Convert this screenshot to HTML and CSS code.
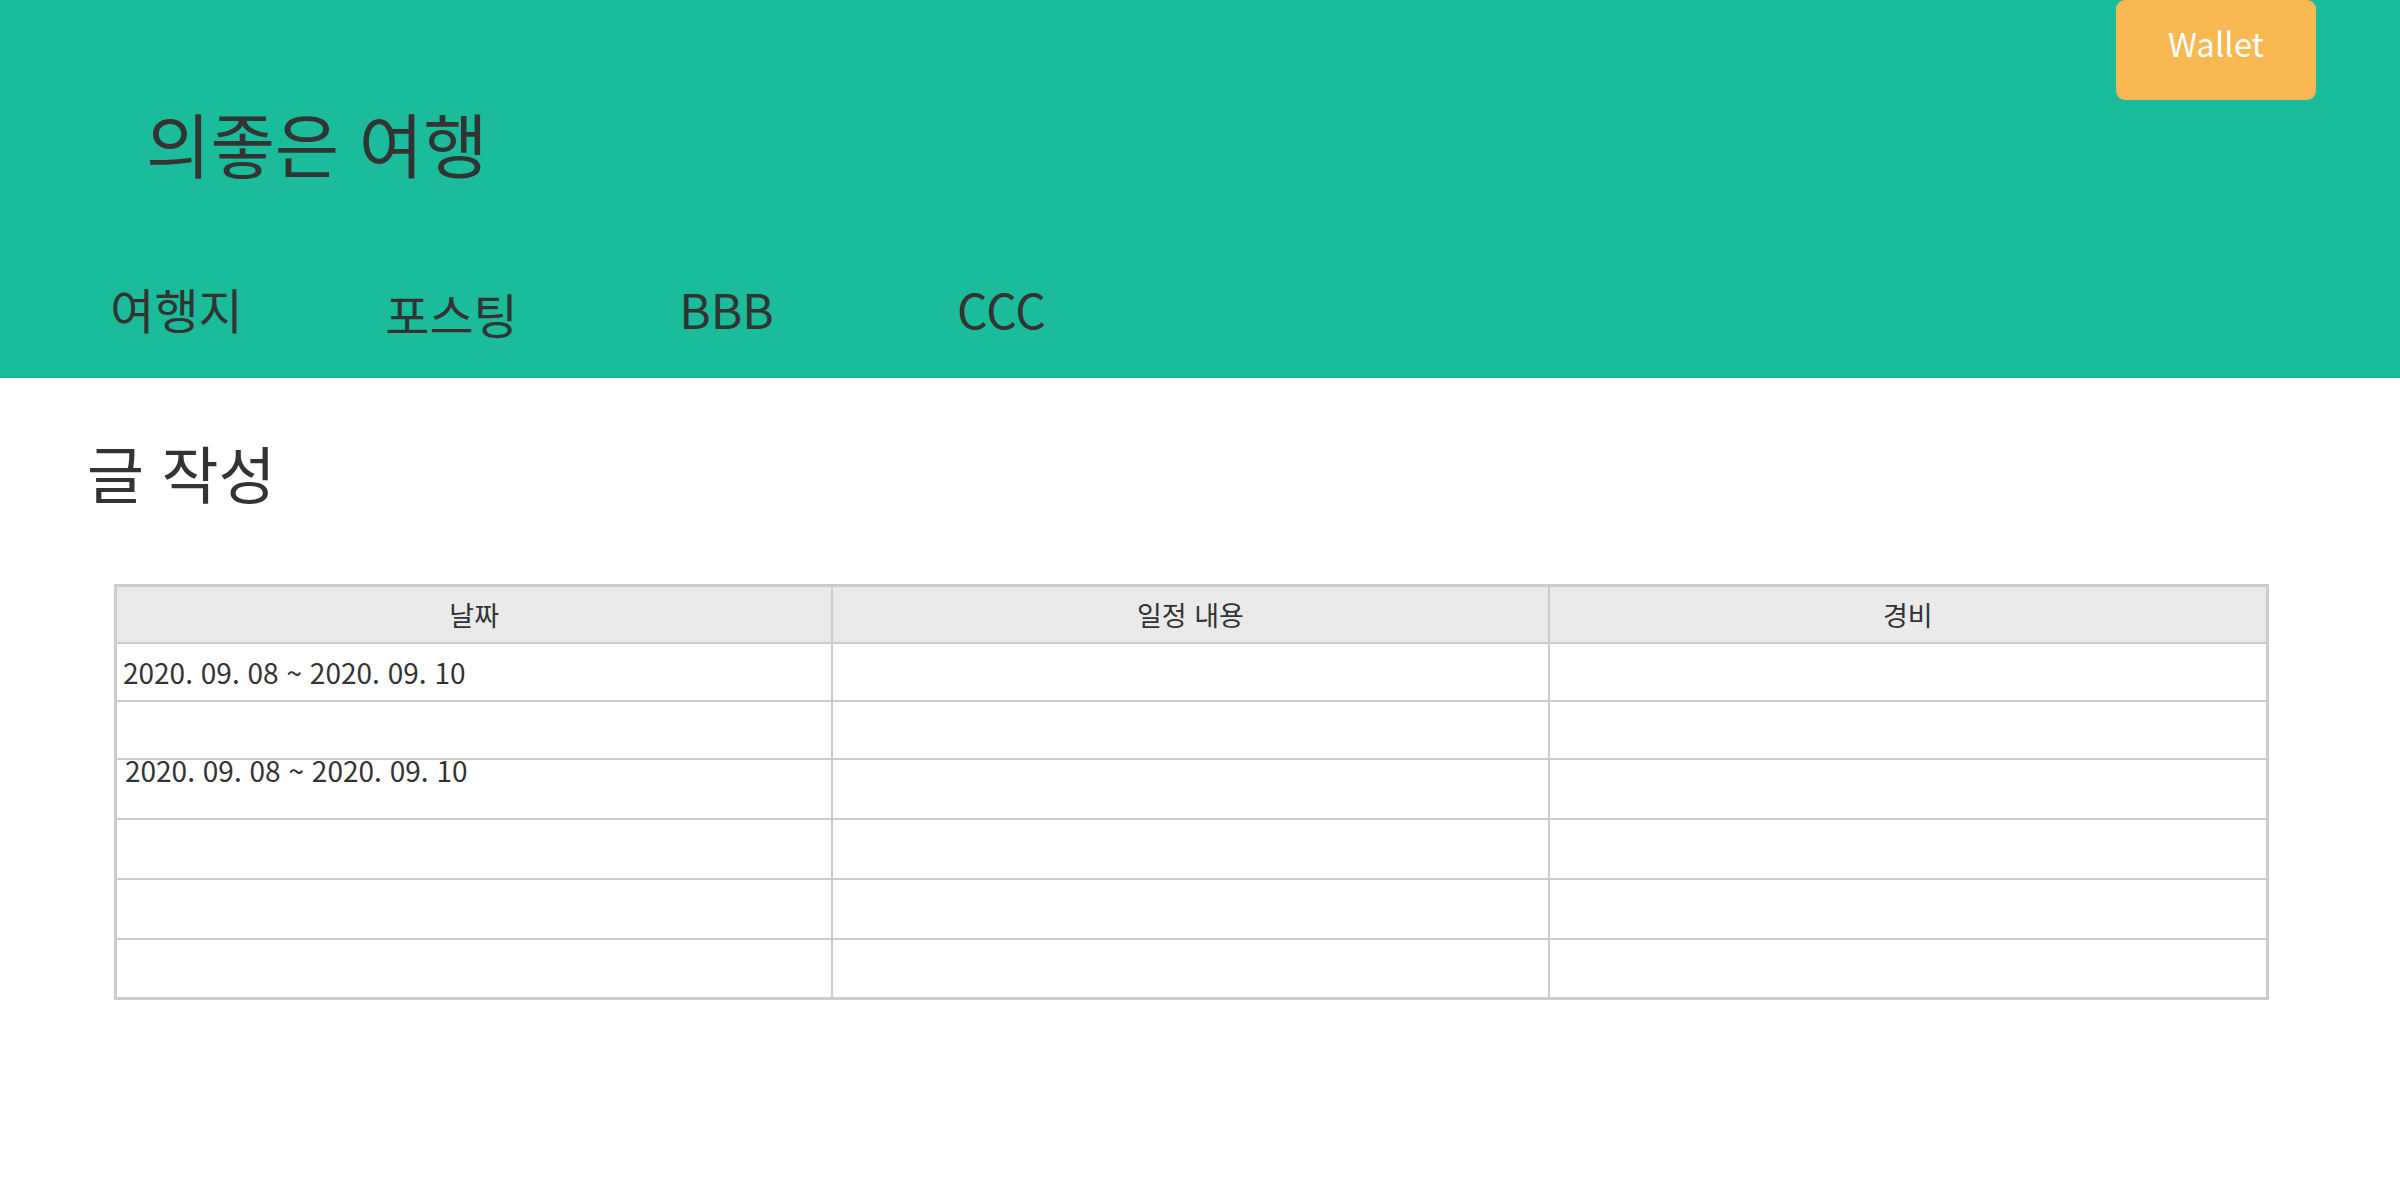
FILE: index.html
```html
<!DOCTYPE html>
<html lang="ko">
<head>
<meta charset="utf-8">
<title>의좋은 여행 - 글 작성</title>
<link rel="stylesheet" href="styles.css">
</head>
<body>
<header class="site-header">
  <div class="brand-row">
    <h1 class="brand">의좋은 여행</h1>
    <a class="wallet-btn" href="#">Wallet</a>
  </div>
  <nav class="main-nav">
    <ul class="nav-list">
      <li class="nav-item">여행지</li>
      <li class="nav-item nav-item--low">포스팅</li>
      <li class="nav-item">BBB</li>
      <li class="nav-item">CCC</li>
    </ul>
  </nav>
</header>
<main class="content">
  <h2 class="page-title">글 작성</h2>
  <table class="plan-table">
    <thead>
      <tr class="row-head">
        <th>날짜</th>
        <th>일정 내용</th>
        <th>경비</th>
      </tr>
    </thead>
    <tbody>
      <tr class="row-short">
        <td class="date-cell">2020. 09. 08 ~ 2020. 09. 10</td>
        <td></td>
        <td></td>
      </tr>
      <tr class="row-short">
        <td></td>
        <td></td>
        <td></td>
      </tr>
      <tr class="row-tall">
        <td class="date-cell date-cell--top">2020. 09. 08 ~ 2020. 09. 10</td>
        <td></td>
        <td></td>
      </tr>
      <tr class="row-tall">
        <td></td>
        <td></td>
        <td></td>
      </tr>
      <tr class="row-tall">
        <td></td>
        <td></td>
        <td></td>
      </tr>
      <tr class="row-last">
        <td></td>
        <td></td>
        <td></td>
      </tr>
    </tbody>
  </table>
</main>
</body>
</html>
```

FILE: styles.css
```css
* {
  box-sizing: border-box;
}

html,
body {
  margin: 0;
  padding: 0;
  background: #ffffff;
}

body {
  font-family: "Noto Sans CJK KR", "Noto Sans", sans-serif;
  color: #333333;
  font-weight: 400;
}

/* ---------- header ---------- */
.site-header {
  height: 378px;
  background: #1abc9c;
  display: flex;
  flex-direction: column;
}

.brand-row {
  display: flex;
  justify-content: space-between;
  align-items: flex-start;
  padding: 0 84px 0 146px;
}

.brand {
  margin: 92px 0 0 0;
  font-size: 70px;
  font-weight: 400;
  line-height: normal;
  color: #333333;
}

.wallet-btn {
  display: block;
  width: 200px;
  height: 100px;
  padding-top: 19px;
  border-radius: 9px;
  background: #f9b852;
  color: #ffffff;
  font-size: 33px;
  line-height: normal;
  text-align: center;
  text-decoration: none;
}

.main-nav {
  margin-top: 85px;
}

.nav-list {
  display: flex;
  align-items: flex-start;
  margin: 0;
  padding: 0 0 0 39px;
  list-style: none;
}

.nav-item {
  width: 275px;
  height: 65px;
  font-size: 48px;
  line-height: 60px;
  text-align: center;
  color: #333333;
}

.nav-item--low {
  padding-top: 5px;
}

/* ---------- content ---------- */
.content {
  padding: 49px 0 0 87px;
}

.page-title {
  margin: 0;
  font-size: 62px;
  font-weight: 400;
  line-height: normal;
  color: #333333;
}

.plan-table {
  margin: 67px 0 0 27px;
  width: 2155px;
  table-layout: fixed;
  border: 3px solid #cccccc;
  border-collapse: separate;
  border-spacing: 0;
  font-size: 27px;
  color: #333333;
}

.plan-table th,
.plan-table td {
  padding: 0;
  border-right: 2px solid #cccccc;
  border-bottom: 2px solid #cccccc;
  vertical-align: middle;
  line-height: 30px;
}

.plan-table th:last-child,
.plan-table td:last-child {
  border-right: 0;
}

.plan-table .row-last td {
  border-bottom: 0;
}

.plan-table th {
  background: #eaeaea;
  font-weight: 400;
  text-align: center;
}

.row-head {
  height: 57px;
}

.row-short {
  height: 58px;
}

.row-tall {
  height: 60px;
}

.row-last {
  height: 57px;
}

.plan-table .date-cell {
  padding-left: 6px;
  font-size: 28px;
  text-align: left;
  white-space: nowrap;
}

.plan-table .date-cell--top {
  vertical-align: top;
  padding-left: 8px;
  line-height: 20px;
}
```
